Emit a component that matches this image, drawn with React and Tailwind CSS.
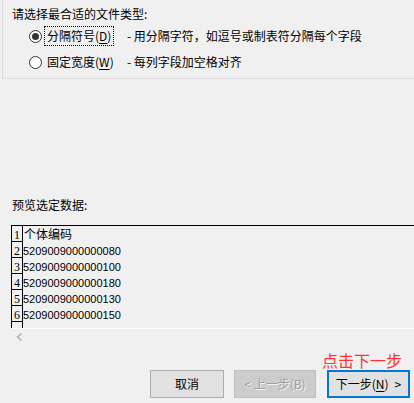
import React from "react";

function Radio({ checked }) {
  return (
    <div className="w-[13px] h-[13px] rounded-full border border-[#333333] bg-white flex items-center justify-center shrink-0">
      {checked && <div className="w-[7px] h-[7px] rounded-full bg-[#333333]" />}
    </div>
  );
}

function Option({ checked, label, accel, desc, focused }) {
  return (
    <div className="h-[20px] flex items-center pl-[17px]">
      <Radio checked={checked} />
      <div
        className={
          "ml-[2px] w-[70px] h-[20px] shrink-0 pl-[2px] flex items-center leading-[16px] whitespace-nowrap border border-dotted " +
          (focused ? "border-black" : "border-transparent")
        }
      >
        {label}(<span className="underline underline-offset-2">{accel}</span>)
      </div>
      <div className="ml-[13px] leading-[16px] whitespace-nowrap">{desc}</div>
    </div>
  );
}

const rows = [
  "5209009000000080",
  "5209009000000100",
  "5209009000000180",
  "5209009000000130",
  "5209009000000150",
];

export default function App() {
  return (
    <div className="w-[414px] h-[403px] bg-[#f0f0f0] overflow-hidden flex flex-col text-[12px] text-black font-['Noto_Sans_CJK_SC',sans-serif]">
      <div className="ml-[2px] h-[79px] shrink-0 border-l border-b border-[#dcdcdc] pl-[9px] pt-[6px] flex flex-col">
        <div className="leading-[16px]">请选择最合适的文件类型:</div>
        <div className="mt-[4px]">
          <Option checked focused label="分隔符号" accel="D" desc="- 用分隔字符，如逗号或制表符分隔每个字段" />
        </div>
        <div className="mt-[6px]">
          <Option label="固定宽度" accel="W" desc="- 每列字段加空格对齐" />
        </div>
      </div>

      <div className="mt-[118px] pl-[12px] leading-[16px]">预览选定数据:</div>

      <div className="mt-[12px] ml-[11px] h-[103px] shrink-0 border-t border-l border-black overflow-hidden flex flex-col">
        <div className="flex h-[16px] shrink-0">
          <div className="w-[11px] shrink-0 border-r border-b border-black text-center text-[12px] leading-[12px] pt-[3px] font-['Liberation_Serif',serif]">1</div>
          <div className="pl-[1px] leading-[14px] pt-[1px] whitespace-nowrap">个体编码</div>
        </div>
        {rows.map((r, i) => (
          <div key={i} className="flex h-[16px] shrink-0">
            <div className="w-[11px] shrink-0 border-r border-b border-black text-center text-[12px] leading-[12px] pt-[3px] font-['Liberation_Serif',serif]">
              {i + 2}
            </div>
            <div className="text-[11px] leading-[14px] pt-[2px] whitespace-nowrap font-['Liberation_Sans',sans-serif]">{r}</div>
          </div>
        ))}
        <div className="flex h-[16px] shrink-0">
          <div className="w-[11px] shrink-0 border-r border-black" />
        </div>
      </div>
      <div className="ml-[12px] h-[1px] bg-white shrink-0" />
      <div className="h-[16px] shrink-0 pl-[16px] pt-[4px]">
        <svg width="7" height="8" viewBox="0 0 7 8">
          <path d="M5.5 0.5 L1.5 4 L5.5 7.5" fill="none" stroke="#b4b4b4" strokeWidth="1.6" />
        </svg>
      </div>

      <div className="mt-[7px] flex justify-end pr-[12px]">
        <div className="text-[16px] leading-[16px] text-[#ff3333]">点击下一步</div>
      </div>
      <div className="mt-[2px] flex justify-end pr-[4px]">
        <button className="w-[74px] h-[28px] bg-[#e1e1e1] border border-[#adadad] text-[12px] leading-[16px] flex items-center justify-center">
          取消
        </button>
        <button className="ml-[10px] w-[82px] h-[28px] bg-[#cccccc] border border-[#bfbfbf] text-[12px] leading-[16px] text-[#a0a0a0] [text-shadow:1px_1px_0_#f4f4f4] flex items-center justify-center">
          &lt; 上一步(B)
        </button>
        <button className="ml-[11px] w-[83px] h-[28px] bg-[#e1e1e1] border-2 border-[#0078d7] text-[12px] leading-[16px] flex items-center justify-center">
          下一步(<span className="underline underline-offset-2">N</span>)<span className="ml-[6px]">&gt;</span>
        </button>
      </div>
    </div>
  );
}
